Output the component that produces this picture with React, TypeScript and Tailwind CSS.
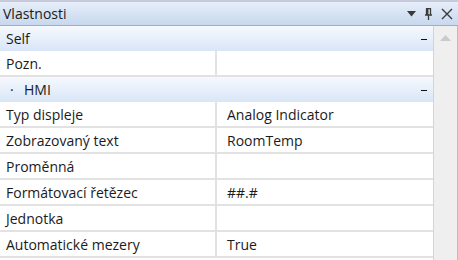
import React from "react";

const font = { fontFamily: '"Open Sans", "Noto Sans", sans-serif' };

function PropRow({ label, value }: { label: string; value?: string }) {
  return (
    <div className="flex h-[26px] border-b-2 border-[#e2e2e2] bg-white">
      <div className="w-[217px] shrink-0 border-r-2 border-[#e2e2e2] pl-[6px] pt-[1px] flex items-center">
        <span>{label}</span>
      </div>
      <div className="flex-1 pl-[10px] pt-[1px] flex items-center">
        <span>{value ?? ""}</span>
      </div>
    </div>
  );
}

function Header({ label, dot }: { label: string; dot?: boolean }) {
  return (
    <div className="flex h-[25px] items-center bg-gradient-to-b from-[#f6f9fe] to-[#d8e6f7] pr-[6px]">
      {dot ? (
        <>
          <span className="pl-[10px] w-[24px]">·</span>
          <span>{label}</span>
        </>
      ) : (
        <span className="pl-[6px]">{label}</span>
      )}
      <div className="ml-auto w-[6px] h-[1px] bg-[#111] mt-[2px]" />
    </div>
  );
}

export default function App() {
  return (
    <div
      className="w-[458px] h-[260px] flex flex-col bg-white text-[14px] text-[#1b1b1b] overflow-hidden"
      style={font}
    >
      {/* title bar */}
      <div className="h-[26px] shrink-0 flex items-center border-t-2 border-t-[#c7cadb] border-b border-b-[#a3adbd] bg-gradient-to-b from-[#e6eef9] to-[#c8d8ee] pl-[3px] pr-[5px]">
        <span>Vlastnosti</span>
        <div className="ml-auto flex items-center gap-[8px]">
          <svg width="9" height="6" viewBox="0 0 9 6">
            <path d="M0 0 H9 L4.5 5.5 Z" fill="#3a3a3a" />
          </svg>
          <svg width="9" height="12" viewBox="0 0 9 12">
            <path d="M2 0.5 H7 M2.5 0.5 V7 M6.5 0.5 V7 M1 7 H8 M4.5 7 V12 M3.8 1 V6.5" stroke="#3a3a3a" strokeWidth="1.3" fill="none" />
          </svg>
          <svg width="12" height="12" viewBox="0 0 12 12">
            <path d="M1 1 L11 11 M11 1 L1 11" stroke="#3a3a3a" strokeWidth="1.4" />
          </svg>
        </div>
      </div>
      {/* body */}
      <div className="flex flex-1 min-h-0">
        <div className="w-[434px] shrink-0 border-r border-[#d4d4d4] flex flex-col">
          <Header label="Self" />
          <PropRow label="Pozn." />
          <Header label="HMI" dot />
          <PropRow label="Typ displeje" value="Analog Indicator" />
          <PropRow label="Zobrazovaný text" value="RoomTemp" />
          <PropRow label="Proměnná" />
          <PropRow label="Formátovací řetězec" value="##.#" />
          <PropRow label="Jednotka" />
          <PropRow label="Automatické mezery" value="True" />
        </div>
        <div className="flex-1 bg-[#efefef] flex justify-center pt-[9px]">
          <svg width="11" height="6" viewBox="0 0 11 6">
            <path d="M0 6 L5.5 0 L11 6 Z" fill="#cacaca" />
          </svg>
        </div>
        <div className="w-[1px] bg-[#b9bccb]" />
      </div>
    </div>
  );
}
